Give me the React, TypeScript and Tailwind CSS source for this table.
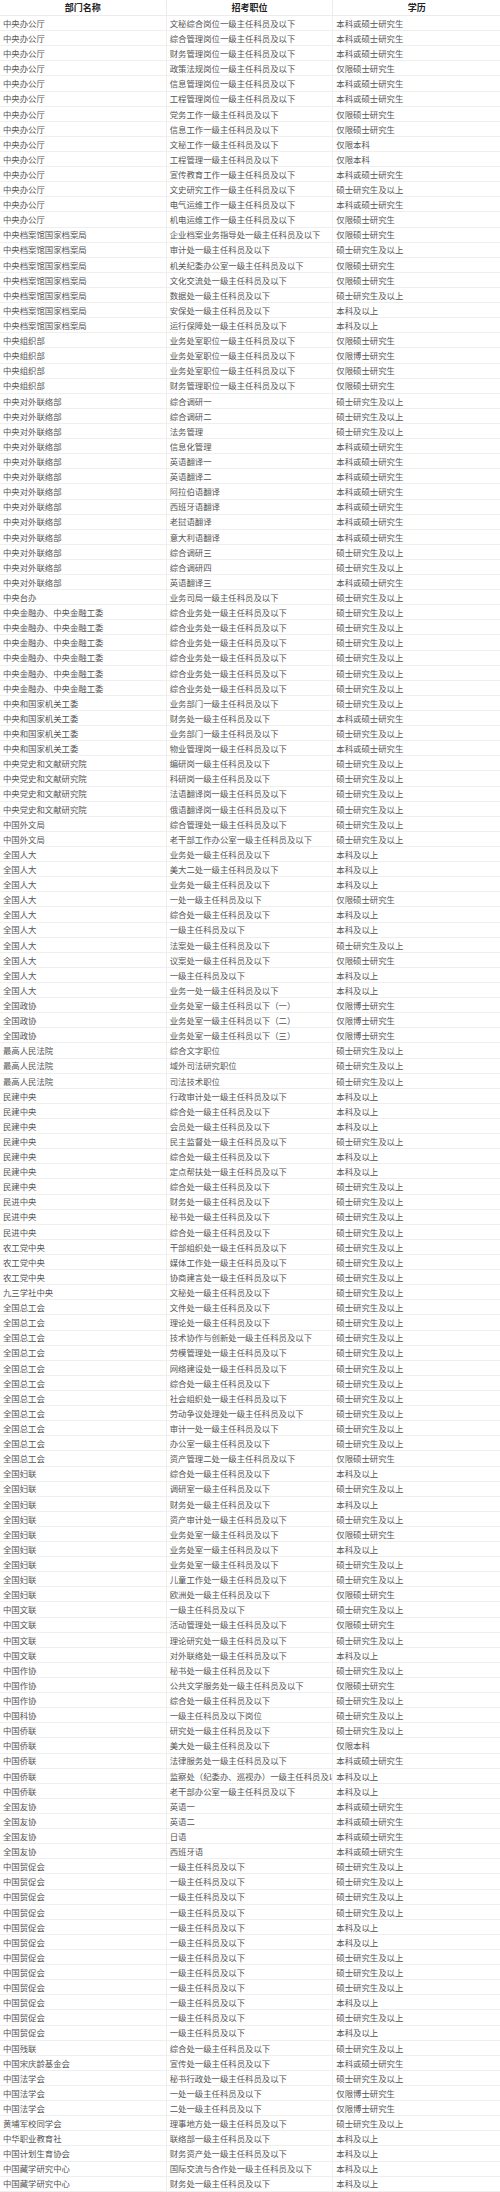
const J = "一级主任科员及以下";
const BS = "本科或硕士研究生";
const SS = "硕士研究生及以上";
const XS = "仅限硕士研究生";
const BO = "仅限博士研究生";
const BK = "本科及以上";
const XB = "仅限本科";

const rows: [string, string, string][] = [
  ["中央办公厅", "文秘综合岗位" + J, BS],
  ["中央办公厅", "综合管理岗位" + J, BS],
  ["中央办公厅", "财务管理岗位" + J, BS],
  ["中央办公厅", "政策法规岗位" + J, XS],
  ["中央办公厅", "信息管理岗位" + J, BS],
  ["中央办公厅", "工程管理岗位" + J, BS],
  ["中央办公厅", "党务工作" + J, XS],
  ["中央办公厅", "信息工作" + J, XS],
  ["中央办公厅", "文秘工作" + J, XB],
  ["中央办公厅", "工程管理" + J, XB],
  ["中央办公厅", "宣传教育工作" + J, BS],
  ["中央办公厅", "文史研究工作" + J, SS],
  ["中央办公厅", "电气运维工作" + J, BS],
  ["中央办公厅", "机电运维工作" + J, XS],
  ["中央档案馆国家档案局", "企业档案业务指导处" + J, XS],
  ["中央档案馆国家档案局", "审计处" + J, SS],
  ["中央档案馆国家档案局", "机关纪委办公室" + J, XS],
  ["中央档案馆国家档案局", "文化交流处" + J, XS],
  ["中央档案馆国家档案局", "数据处" + J, SS],
  ["中央档案馆国家档案局", "安保处" + J, BK],
  ["中央档案馆国家档案局", "运行保障处" + J, BK],
  ["中央组织部", "业务处室职位" + J, XS],
  ["中央组织部", "业务处室职位" + J, BO],
  ["中央组织部", "业务处室职位" + J, XS],
  ["中央组织部", "财务管理职位" + J, XS],
  ["中央对外联络部", "综合调研一", SS],
  ["中央对外联络部", "综合调研二", SS],
  ["中央对外联络部", "法务管理", SS],
  ["中央对外联络部", "信息化管理", BS],
  ["中央对外联络部", "英语翻译一", BS],
  ["中央对外联络部", "英语翻译二", BS],
  ["中央对外联络部", "阿拉伯语翻译", BS],
  ["中央对外联络部", "西班牙语翻译", BS],
  ["中央对外联络部", "老挝语翻译", BS],
  ["中央对外联络部", "意大利语翻译", BS],
  ["中央对外联络部", "综合调研三", SS],
  ["中央对外联络部", "综合调研四", SS],
  ["中央对外联络部", "英语翻译三", BS],
  ["中央台办", "业务司局" + J, SS],
  ["中央金融办、中央金融工委", "综合业务处" + J, SS],
  ["中央金融办、中央金融工委", "综合业务处" + J, SS],
  ["中央金融办、中央金融工委", "综合业务处" + J, SS],
  ["中央金融办、中央金融工委", "综合业务处" + J, SS],
  ["中央金融办、中央金融工委", "综合业务处" + J, SS],
  ["中央金融办、中央金融工委", "综合业务处" + J, SS],
  ["中央和国家机关工委", "业务部门" + J, SS],
  ["中央和国家机关工委", "财务处" + J, BS],
  ["中央和国家机关工委", "业务部门" + J, SS],
  ["中央和国家机关工委", "物业管理岗" + J, BS],
  ["中央党史和文献研究院", "编研岗" + J, SS],
  ["中央党史和文献研究院", "科研岗" + J, SS],
  ["中央党史和文献研究院", "法语翻译岗" + J, SS],
  ["中央党史和文献研究院", "俄语翻译岗" + J, SS],
  ["中国外文局", "综合管理处" + J, SS],
  ["中国外文局", "老干部工作办公室" + J, SS],
  ["全国人大", "业务处" + J, BK],
  ["全国人大", "美大二处" + J, BK],
  ["全国人大", "业务处" + J, BK],
  ["全国人大", "一处" + J, XS],
  ["全国人大", "综合处" + J, BK],
  ["全国人大", J, BK],
  ["全国人大", "法案处" + J, SS],
  ["全国人大", "议案处" + J, XS],
  ["全国人大", J, BK],
  ["全国人大", "业务一处" + J, BK],
  ["全国政协", "业务处室一级主任科员以下（一）", BO],
  ["全国政协", "业务处室一级主任科员以下（二）", BO],
  ["全国政协", "业务处室一级主任科员以下（三）", BO],
  ["最高人民法院", "综合文字职位", SS],
  ["最高人民法院", "域外司法研究职位", SS],
  ["最高人民法院", "司法技术职位", SS],
  ["民建中央", "行政审计处" + J, BK],
  ["民建中央", "综合处" + J, BK],
  ["民建中央", "会员处" + J, BK],
  ["民建中央", "民主监督处" + J, SS],
  ["民建中央", "综合处" + J, BK],
  ["民建中央", "定点帮扶处" + J, BK],
  ["民建中央", "综合处" + J, SS],
  ["民进中央", "财务处" + J, SS],
  ["民进中央", "秘书处" + J, SS],
  ["民进中央", "综合处" + J, SS],
  ["农工党中央", "干部组织处" + J, SS],
  ["农工党中央", "媒体工作处" + J, SS],
  ["农工党中央", "协商建言处" + J, SS],
  ["九三学社中央", "文秘处" + J, SS],
  ["全国总工会", "文件处" + J, SS],
  ["全国总工会", "理论处" + J, SS],
  ["全国总工会", "技术协作与创新处" + J, SS],
  ["全国总工会", "劳模管理处" + J, SS],
  ["全国总工会", "网络建设处" + J, SS],
  ["全国总工会", "综合处" + J, SS],
  ["全国总工会", "社会组织处" + J, SS],
  ["全国总工会", "劳动争议处理处" + J, SS],
  ["全国总工会", "审计一处" + J, SS],
  ["全国总工会", "办公室" + J, SS],
  ["全国总工会", "资产管理二处" + J, XS],
  ["全国妇联", "综合处" + J, BK],
  ["全国妇联", "调研室" + J, SS],
  ["全国妇联", "财务处" + J, BK],
  ["全国妇联", "资产审计处" + J, SS],
  ["全国妇联", "业务处室" + J, XS],
  ["全国妇联", "业务处室" + J, BK],
  ["全国妇联", "业务处室" + J, SS],
  ["全国妇联", "儿童工作处" + J, SS],
  ["全国妇联", "欧洲处" + J, XS],
  ["中国文联", J, SS],
  ["中国文联", "活动管理处" + J, XS],
  ["中国文联", "理论研究处" + J, SS],
  ["中国文联", "对外联络处" + J, BK],
  ["中国作协", "秘书处" + J, SS],
  ["中国作协", "公共文学服务处" + J, XS],
  ["中国作协", "综合处" + J, SS],
  ["中国科协", J + "岗位", SS],
  ["中国侨联", "研究处" + J, SS],
  ["中国侨联", "美大处" + J, XB],
  ["中国侨联", "法律服务处" + J, BS],
  ["中国侨联", "监察处（纪委办、巡视办）" + J, BK],
  ["中国侨联", "老干部办公室" + J, BK],
  ["全国友协", "英语一", BS],
  ["全国友协", "英语二", BS],
  ["全国友协", "日语", BS],
  ["全国友协", "西班牙语", BS],
  ["中国贸促会", J, SS],
  ["中国贸促会", J, SS],
  ["中国贸促会", J, SS],
  ["中国贸促会", J, SS],
  ["中国贸促会", J, BK],
  ["中国贸促会", J, BK],
  ["中国贸促会", J, SS],
  ["中国贸促会", J, SS],
  ["中国贸促会", J, SS],
  ["中国贸促会", J, BK],
  ["中国贸促会", J, SS],
  ["中国贸促会", J, BK],
  ["中国残联", "综合处" + J, SS],
  ["中国宋庆龄基金会", "宣传处" + J, BS],
  ["中国法学会", "秘书行政处" + J, SS],
  ["中国法学会", "一处" + J, BO],
  ["中国法学会", "二处" + J, BO],
  ["黄埔军校同学会", "理事地方处" + J, SS],
  ["中华职业教育社", "联络部" + J, BK],
  ["中国计划生育协会", "财务资产处" + J, BK],
  ["中国藏学研究中心", "国际交流与合作处" + J, BK],
  ["中国藏学研究中心", "财务处" + J, BK],
];

export default function App() {
  return (
    <div className="w-[500px] bg-white font-['Noto_Sans_CJK_SC',sans-serif]">
      {/* Header */}
      <div className="grid h-4 grid-cols-3 border-b border-[#ececec] text-[9px] font-bold text-[#222]">
        <div className="flex items-center justify-center border-r border-[#ececec]">部门名称</div>
        <div className="flex items-center justify-center border-r border-[#ececec]">招考职位</div>
        <div className="flex items-center justify-center">学历</div>
      </div>

      {rows.map(([dept, pos, edu], i) => (
        <div
          key={i}
          className="grid h-[15.11px] grid-cols-3 border-b border-[#efefef] text-[8.4px] leading-none text-[#555]"
        >
          <div className="flex items-center overflow-hidden whitespace-nowrap border-r border-[#efefef] pl-[3px]">
            {dept}
          </div>
          <div className="flex items-center overflow-hidden whitespace-nowrap border-r border-[#efefef] pl-[3px]">
            {pos}
          </div>
          <div className="flex items-center overflow-hidden whitespace-nowrap pl-[3px]">{edu}</div>
        </div>
      ))}
    </div>
  );
}
